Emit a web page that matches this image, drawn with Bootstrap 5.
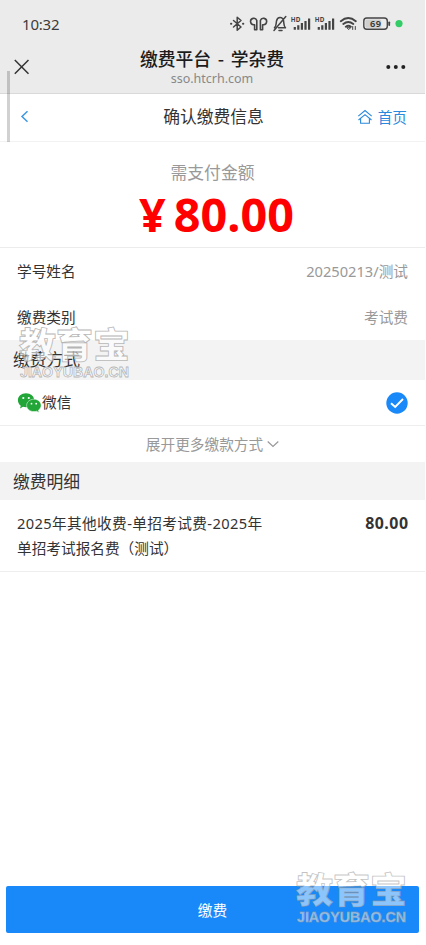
<!DOCTYPE html>
<html lang="zh-CN">
<head>
<meta charset="utf-8">
<meta name="viewport" content="width=device-width, initial-scale=1">
<title>缴费平台 - 学杂费</title>
<link href="https://cdn.jsdelivr.net/npm/bootstrap@5.3.0/dist/css/bootstrap.min.css" rel="stylesheet">
<style>
  body { font-family: "Noto Sans", "Noto Sans CJK SC", sans-serif; color: #333; background: #fff; font-size: 14.67px; line-height: 20px; overflow: hidden; }
  svg { display: block; flex: none; }
  .screen { width: 425px; height: 945px; }
  .app-head { height: 93px; background: #ebebeb; }
  .status-line { height: 46px; padding: 1px 20px 0 22px; }
  .clock { font-size: 15px; color: #3c3c3c; letter-spacing: -.2px; }
  .title-line { height: 47px; padding: 0 19px 0 14px; }
  .title-box { padding-left: 8px; }
  .page-title { font-size: 17.8px; line-height: 24px; font-weight: 500; color: #1c1c1c; font-family: "Noto Sans CJK SC", sans-serif; word-spacing: 2.6px; }
  .page-host { font-size: 12.5px; line-height: 18px; color: #888; }
  .sub-nav { height: 49px; border-top: 1px solid #d9d9d9; border-bottom: 1px solid #f2f2f2; padding: 0 18px 2px 20px; }
  .sub-title { font-size: 16.8px; }
  .blue-text { color: #2a89dc; }
  .pay-sum { height: 106px; border-bottom: 1px solid #ececec; padding-top: 20px; }
  .grey-text { color: #999; }
  .sum-label { font-size: 16.8px; line-height: 22px; }
  .sum-value { font-size: 46.8px; line-height: 60px; font-weight: 700; color: #f00; gap: 8px; padding-left: 8px; }
  .line-item { height: 46px; padding: 0 17px; }
  .line-item > span { padding-bottom: 1px; }
  .section-bar { background: #f3f3f3; padding-left: 13px; font-size: 16.8px; }
  .method-bar { height: 40px; }
  .items-bar { height: 38px; padding-top: 1px; }
  .thin-bottom { border-bottom: 1px solid #eee; }
  .more-line { height: 36px; padding-bottom: 1px; }
  .detail { height: 72px; padding: 11px 17px 0; line-height: 25px; }
  .detail-name { width: 255px; }
  .long-name { letter-spacing: .37px; }
  .detail-sum { font-weight: 700; font-size: 15.9px; letter-spacing: .5px; margin-right: -.5px; }
  .pay-btn { margin: 0 6px 12px; height: 47px; background: #1989fa; color: #fff; border: 0; border-radius: 2px; font-size: 14.67px; }
  .scroll-mark { left: 7px; top: 71px; width: 3px; height: 71px; background: #0000002e; }
  .stamp-a { left: 14px; top: 325px; }
  .stamp-b { left: 291px; top: 870px; }
</style>
<script src="https://cdn.jsdelivr.net/npm/bootstrap@5.3.0/dist/js/bootstrap.bundle.min.js"></script>
</head>
<body>
<main class="screen position-relative d-flex flex-column">
  <header class="app-head">
    <div class="status-line d-flex align-items-center justify-content-between">
      <span class="clock">10:32</span>
      <svg width="176" height="20" viewBox="229 14 176 20" fill="none" stroke="#444" stroke-width="1.500" stroke-linecap="round" stroke-linejoin="round">
        <path d="M233.500 20.500l7.500 6.500-3.800 3.300V17.300L241 20.500l-7.500 6.500"/>
        <path d="M231 23.700h.3M243 23.700h.3" stroke-width="2"/>
        <path d="M256.800 29.800V20.500a3.200 3.200 0 1 0-3.200 4.200h1v5.100zM260.400 29.800V20.500a3.200 3.200 0 1 1 3.200 4.200h-1v5.100z" stroke-width="1.600"/>
        <path d="M274.500 27.700c2-1.500 1.500-4.200 2-6.700 1-4.500 6-4.500 7-.5.600 3 0 5.500 2 7.200h-7M279 30.500h3M274 30.500l11.800-14"/>
        <g id="cell" stroke="none" fill="#444">
          <path d="M293.700 27h2.200v2.800h-2.200zM297.200 25.200h2.200v4.600h-2.200zM300.800 23h2.200v6.800h-2.200zM304.400 21h2.200v8.800h-2.200zM308 18.500h2.200v11.300H308z"/>
          <text x="290.800" y="21.800" font-size="6.200" font-weight="700" font-family="Noto Sans" textLength="9.500" lengthAdjust="spacingAndGlyphs">HD</text>
        </g>
        <use href="#cell" x="24"/>
        <path d="M340.800 21.200q7.500-6.200 15 0M343.300 24q5-4 10 0M345.800 26.700q2.700-2 5 0" stroke-width="1.900"/>
        <path d="M348.500 29.300l-1.700-1.600h3.400zM352.700 29.500v-3M355.300 26.500v3" stroke-width="1"/>
        <rect x="363.800" y="18" width="23.500" height="11.300" rx="3" stroke-width="1.400"/>
        <path d="M389.200 22.300v2.700" stroke-width="1.800"/>
        <rect x="365.300" y="19.500" width="16" height="8.300" rx="1.500" fill="#cfcfcf" stroke="none"/>
        <text x="370" y="27" font-size="9.200" font-weight="600" font-family="Noto Sans" fill="#333" stroke="none" textLength="11">69</text>
        <circle cx="399" cy="23.600" r="3.600" fill="#34cc68" stroke="none"/>
      </svg>
    </div>
    <div class="title-line d-flex justify-content-between">
      <svg class="mt-2" width="16" height="26" viewBox="0 0 16 26" fill="none" stroke="#333" stroke-width="1.500"><path d="M.8 6l13.700 13.700M14.500 6L.8 19.700"/></svg>
      <div class="title-box text-center">
        <div class="page-title">缴费平台 - 学杂费</div>
        <div class="page-host">sso.htcrh.com</div>
      </div>
      <svg class="mt-2" width="20" height="26" viewBox="0 0 20 26" fill="#222"><circle cx="2.300" cy="13" r="2"/><circle cx="9.800" cy="13" r="2"/><circle cx="17.300" cy="13" r="2"/></svg>
    </div>
  </header>

  <nav class="sub-nav d-flex align-items-center justify-content-between">
    <div class="col"><svg width="9" height="13" viewBox="0 0 9 13" fill="none" stroke="#3d98e6" stroke-width="1.500"><path d="M7.500 1.200L2 6.500l5.500 5.300"/></svg></div>
    <div class="sub-title">确认缴费信息</div>
    <div class="col d-flex align-items-center justify-content-end blue-text">
      <svg class="me-1" width="17" height="16" viewBox="0 0 17 16" fill="none" stroke="#2a89dc" stroke-width="1.100"><path d="M1.300 7.200L8 1.500l6.700 5.700M1.500 11L8 5.600l6.500 5.400M3.600 9.800v4.400h8.800V9.800"/></svg>
      首页
    </div>
  </nav>

  <section class="pay-sum text-center">
    <div class="sum-label grey-text">需支付金额</div>
    <div class="sum-value d-flex justify-content-center"><span>¥</span><span>80.00</span></div>
  </section>

  <div class="line-item d-flex align-items-center justify-content-between"><span>学号姓名</span><span class="grey-text">20250213/测试</span></div>
  <div class="line-item d-flex align-items-center justify-content-between"><span>缴费类别</span><span class="grey-text">考试费</span></div>

  <div class="section-bar method-bar d-flex align-items-center">缴费方式</div>
  <div class="line-item thin-bottom d-flex align-items-center">
    <svg width="25" height="20" viewBox="0 0 25 20" fill="#21a637">
      <path d="M9 .2C4.300.2.900 3.300.900 7.200c0 2.200 1.100 4.200 2.900 5.500l-.8 2.700 3-1.700c1 .3 2 .5 3 .5 4.600 0 8.200-3.100 8.200-7S13.600.2 9 .2z"/>
      <path d="M17 6.200c-4 0-7.400 2.700-7.400 6.200s3.400 6.200 7.400 6.200c.9 0 1.700-.1 2.500-.4l2.500 1.400-.6-2.400c1.600-1.100 2.700-2.900 2.700-4.800 0-3.500-3.200-6.200-7.100-6.200z" stroke="#fff" stroke-width=".5"/>
      <g fill="#fff"><circle cx="6.300" cy="5" r="1.100"/><circle cx="11.800" cy="5" r="1.100"/><circle cx="14.500" cy="10.700" r=".9"/><circle cx="19.200" cy="10.700" r=".9"/></g>
    </svg>
    <span>微信</span>
    <svg class="ms-auto" width="22" height="22" viewBox="0 0 22 22"><circle cx="11" cy="11" r="10.700" fill="#1989fa"/><path d="M5 11.200l4.200 3.800 7.800-8" fill="none" stroke="#fff" stroke-width="1.900"/></svg>
  </div>
  <div class="more-line grey-text d-flex align-items-center justify-content-center">展开更多缴款方式<svg class="ms-1" width="12" height="8" viewBox="0 0 12 8" fill="none" stroke="#999" stroke-width="1.200"><path d="M.7 1.500L6 6.500l5.300-5"/></svg></div>

  <div class="section-bar items-bar d-flex align-items-center">缴费明细</div>
  <div class="detail thin-bottom d-flex justify-content-between">
    <div class="detail-name"><span class="long-name">2025年其他收费-单招考试费-2025年</span><br>单招考试报名费（测试）</div>
    <div class="detail-sum">80.00</div>
  </div>

  <button type="button" class="pay-btn btn mt-auto p-0">缴费</button>

  <div class="scroll-mark position-absolute"></div>
  <svg class="stamp-a position-absolute" width="123" height="60" viewBox="-4 0 123 60" overflow="visible" fill="#fff" fill-opacity=".6" stroke="#aaa" stroke-opacity=".85" stroke-width=".8">
    <g id="stamp">
      <text x="1" y="33" font-size="35" font-weight="900" font-family="Noto Sans CJK SC" textLength="111" lengthAdjust="spacingAndGlyphs">教育宝</text>
      <text x="2" y="51.500" font-size="14.500" font-weight="700" font-family="Liberation Sans" textLength="109" lengthAdjust="spacingAndGlyphs">JIAOYUBAO.CN</text>
    </g>
  </svg>
  <svg class="stamp-b position-absolute" width="123" height="60" viewBox="-4 0 123 60" overflow="visible" fill="#fff" fill-opacity=".5" stroke="#999" stroke-opacity=".6" stroke-width=".8"><use href="#stamp"/></svg>
</main>
</body>
</html>
